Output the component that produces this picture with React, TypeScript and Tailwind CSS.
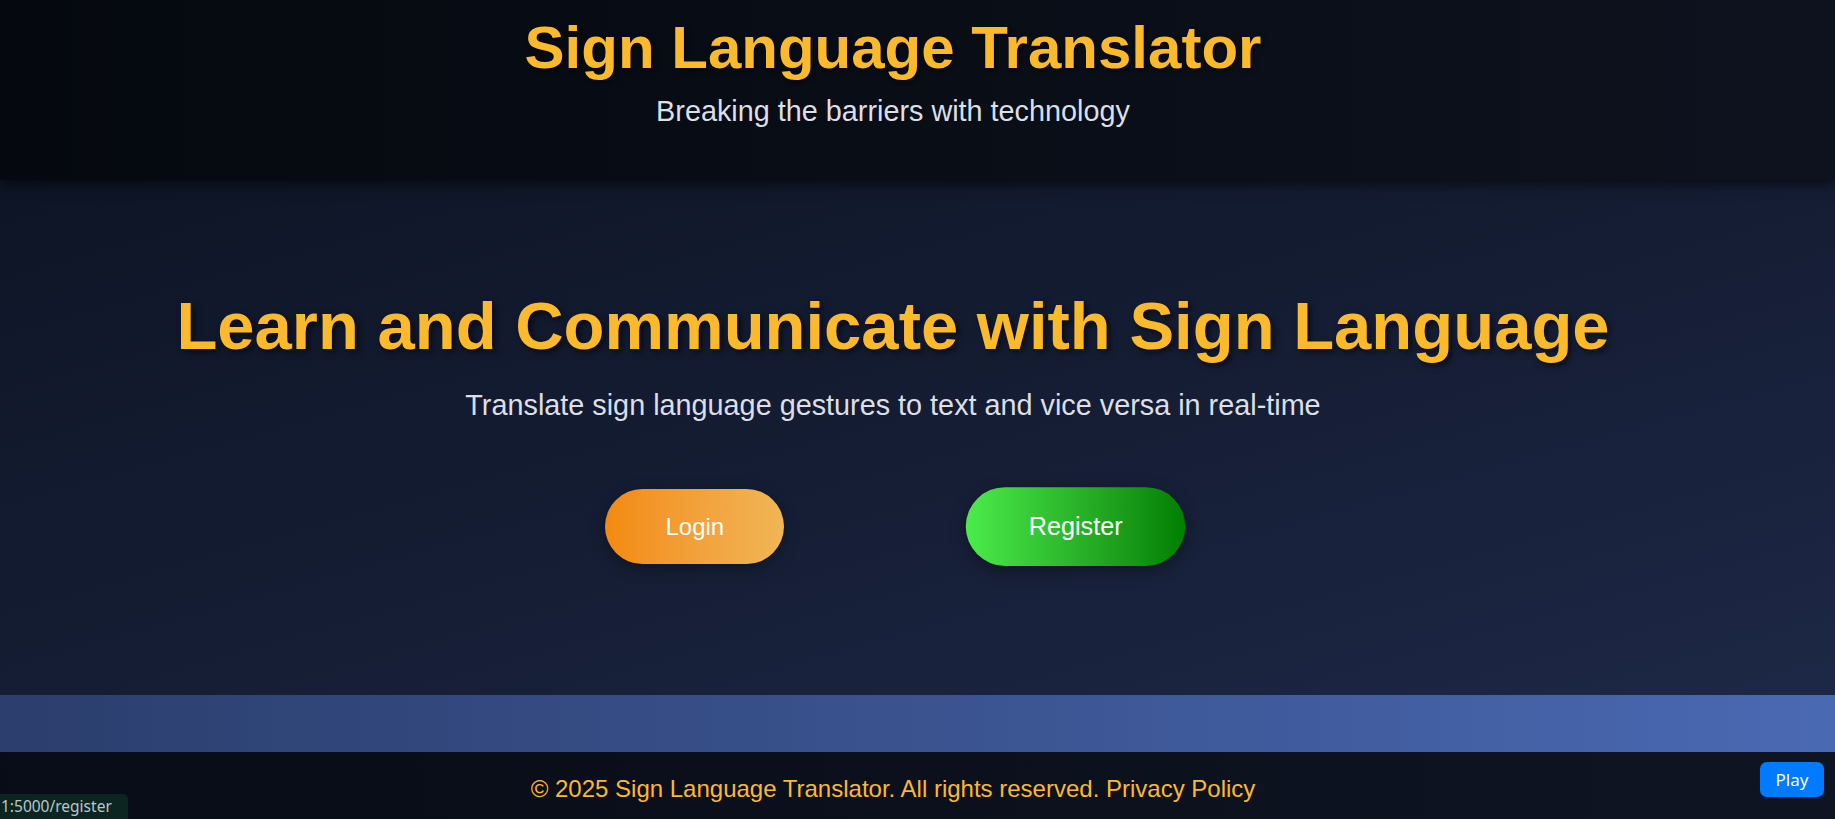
export default function App() {
  return (
    <div className="relative flex min-h-[819px] flex-col font-['Liberation_Sans',Arial,sans-serif]">
      <header className="relative z-10 bg-gradient-to-r from-[#05090f] to-[#0d121e] pb-[52px] pt-[13px] shadow-[0_4px_12px_rgba(0,0,0,0.6)]">
        <div className="flex flex-col items-center pr-[49px]">
          <h1 className="text-[60px] font-bold leading-[69px] text-[#fbb92c] [text-shadow:2px_2px_4px_rgba(0,0,0,0.5)]">
            Sign Language Translator
          </h1>
          <p className="mt-[13px] text-[28.8px] leading-[33px] text-[#dcdfe6]">
            Breaking the barriers with technology
          </p>
        </div>
      </header>

      <main className="bg-gradient-to-br from-[#0e1526] via-[#151d34] to-[#1d2846] pb-[131px] pt-[107px]">
        <div className="flex flex-col items-center pr-[49px]">
          <h2 className="text-[67px] font-bold leading-[77px] text-[#fbb92c] [text-shadow:3px_3px_6px_rgba(0,0,0,0.6)]">
            Learn and Communicate with Sign Language
          </h2>
          <p className="mt-[25px] text-[28.8px] leading-[33px] text-[#dcdfe6]">
            Translate sign language gestures to text and vice versa in real-time
          </p>
          <div className="mt-[67px] flex items-center gap-[187px]">
            <a className="rounded-full bg-gradient-to-r from-[#f38a0c] to-[#f0b655] px-[60px] py-[24px] text-[24px] leading-[27px] text-white shadow-[0_4px_15px_rgba(0,0,0,0.35)]">
              Login
            </a>
            <a className="scale-105 rounded-full bg-gradient-to-r from-[#4bec4b] to-[#007f00] px-[60px] py-[24px] text-[24px] leading-[27px] text-white shadow-[0_4px_15px_rgba(0,0,0,0.35)]">
              Register
            </a>
          </div>
        </div>
      </main>

      <div className="h-[57px] bg-gradient-to-r from-[#2b3e6d] to-[#4a69b3]" />

      <footer className="flex-1 bg-gradient-to-r from-[#080c16] to-[#0f1423] pt-[23px]">
        <p className="pr-[49px] text-center text-[24px] leading-[28px] text-[#fbb92c]">
          © 2025 Sign Language Translator. All rights reserved. Privacy Policy
        </p>
      </footer>

      <button className="absolute bottom-[22px] right-[11px] h-[35px] w-[64px] rounded-[7px] bg-[#007bff] font-['Noto_Sans',sans-serif] text-[17px] text-white">
        Play
      </button>

      <div className="absolute bottom-0 left-0 flex h-[25px] w-[128px] items-center overflow-hidden rounded-tr-[5px] bg-[#0c2520] pl-[1px] font-['Noto_Sans',sans-serif] text-[15.5px] text-[#b9c6cc]">
        1:5000/register
      </div>
    </div>
  );
}
